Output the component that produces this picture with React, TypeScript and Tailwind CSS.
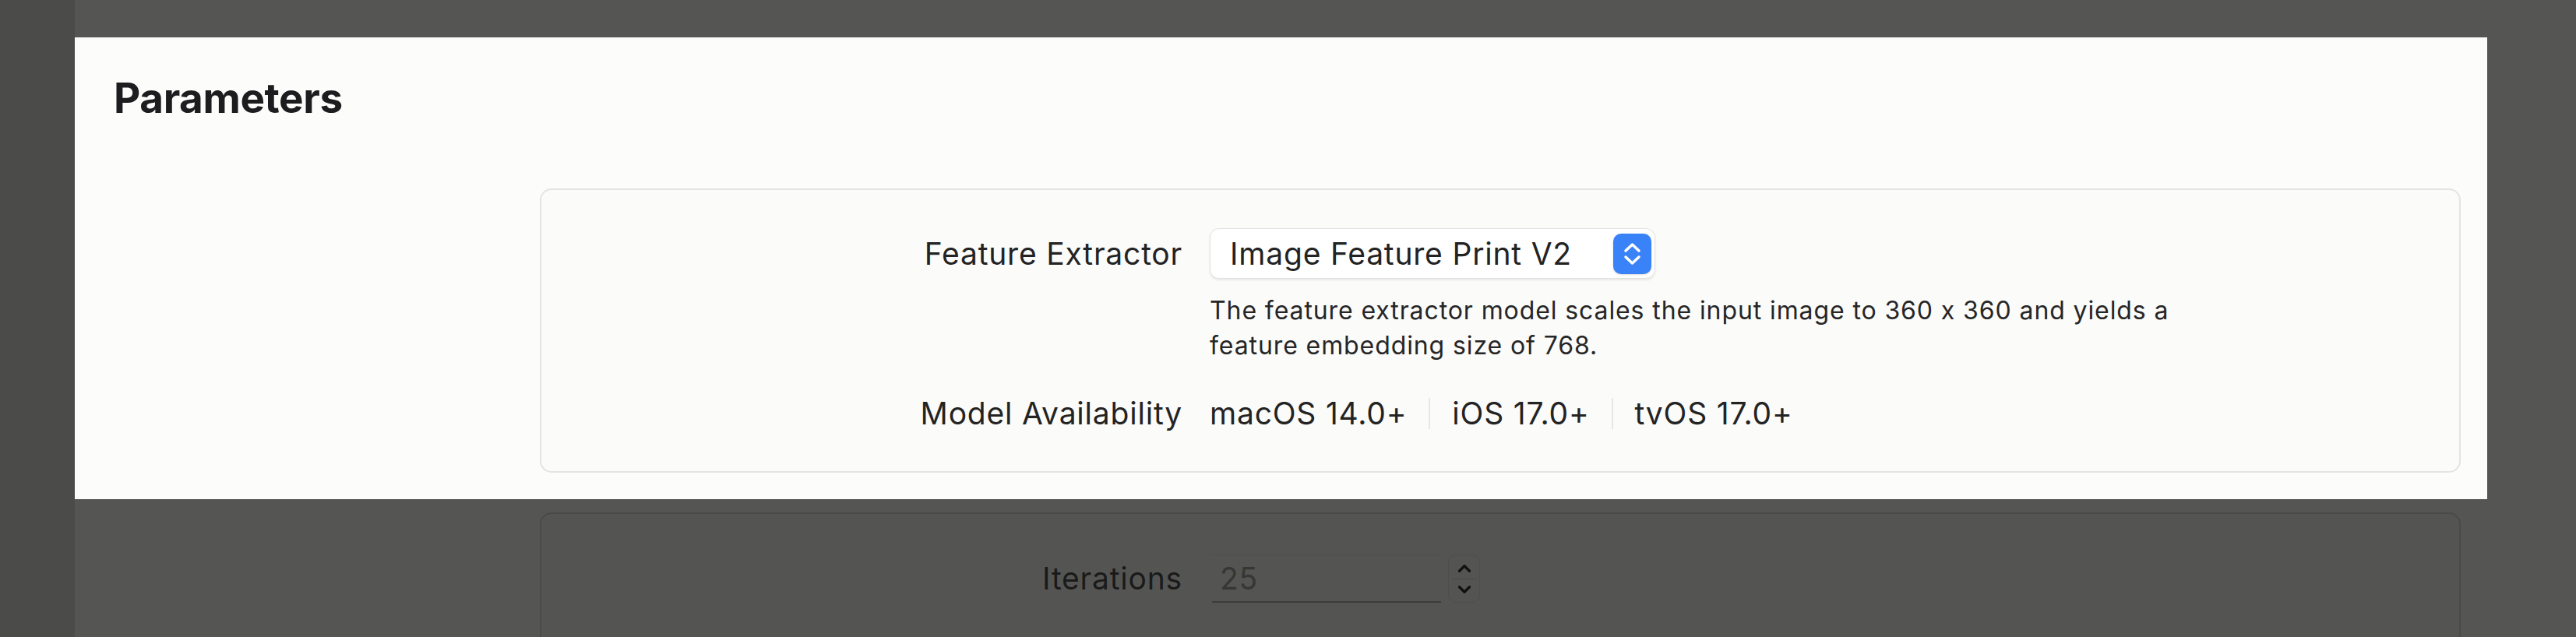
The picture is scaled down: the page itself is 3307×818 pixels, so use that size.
import { ChevronDown, ChevronUp } from "lucide-react";

function PopupStepper() {
  return (
    <div className="flex h-[52px] w-[49px] items-center justify-center rounded-[10px] bg-[#3a82f7] shadow-[0_1px_2px_rgba(0,0,0,0.15)]">
      <svg width="49" height="52" viewBox="0 0 49 52" fill="none">
        <path d="M16 22 L24.5 14 L33 22" stroke="white" strokeWidth="3.5" strokeLinecap="round" strokeLinejoin="round" />
        <path d="M16 30 L24.5 38 L33 30" stroke="white" strokeWidth="3.5" strokeLinecap="round" strokeLinejoin="round" />
      </svg>
    </div>
  );
}

function Divider() {
  return <span className="mx-[28px] h-[40px] w-[2px] bg-[#e6e6e4]" />;
}

export default function App() {
  return (
    <div className="flex h-[818px] w-[3307px] overflow-hidden bg-[#555654] font-['Inter',sans-serif] [font-feature-settings:'calt'_0]">
      {/* sidebar, dimmed */}
      <div className="w-[96px] shrink-0 bg-[#4b4c4a]" />

      <div className="flex flex-1 flex-col pt-[48px]">
        {/* highlighted panel */}
        <section className="flex h-[593px] w-[3097px] shrink-0 flex-col bg-[#fcfcfb]">
          <h2 className="ml-[50px] mt-[52px] text-[53px] font-bold leading-none tracking-[-0.4px] text-[#1d1d1f]">
            Parameters
          </h2>

          <div className="ml-[597px] mr-[34px] mt-[89px] h-[365px] rounded-[15px] border-2 border-[#e4e4e2] bg-[#fbfbfa] pt-[49px]">
            <div className="grid grid-cols-[823px_1fr] gap-x-[35px] text-[39px] leading-[48px] tracking-[0.8px] text-[#232323]">
              <div className="flex h-[65px] items-center justify-end">Feature Extractor</div>
              <div className="flex h-[65px] w-[572px] items-center justify-between rounded-[12px] border border-[#e2e2e0] bg-white pl-[25px] pr-[4px] shadow-[0_2px_3px_rgba(0,0,0,0.08)]">
                <span>Image Feature Print V2</span>
                <PopupStepper />
              </div>

              <div />
              <p className="mt-[18px] w-[1290px] text-[32px] leading-[45px] tracking-[0.9px] text-[#262626]">
                The feature extractor model scales the input image to 360 x 360 and yields a feature embedding size of 768.
              </p>

              <div className="mt-[41px] text-right">Model Availability</div>
              <div className="mt-[41px] flex items-center">
                <span>macOS 14.0+</span>
                <Divider />
                <span>iOS 17.0+</span>
                <Divider />
                <span>tvOS 17.0+</span>
              </div>
            </div>
          </div>
        </section>

        {/* next card, dimmed */}
        <div className="ml-[597px] mr-[148px] mt-[17px] flex-1 rounded-t-[15px] border-2 border-b-0 border-[#4a4b49] bg-[#545553] pt-[52px]">
          <div className="grid grid-cols-[823px_1fr] gap-x-[35px] text-[39px] leading-[48px] tracking-[0.8px]">
            <div className="flex h-[62px] items-center justify-end text-[#1a1a1a]">Iterations</div>
            <div className="flex items-center">
              <div className="ml-[3px] flex h-[62px] w-[294px] items-center border-t border-b-2 border-t-[#4f504e] border-b-[#3c3d3b] pl-[10px] text-[#363735]">
                25
              </div>
              <div className="ml-[9px] flex h-[62px] w-[41px] flex-col items-center justify-center rounded-[10px] border border-[#4e4f4d] text-[#111]">
                <ChevronUp size={26} strokeWidth={3} />
                <span className="h-px w-[30px] bg-[#4a4b49]" />
                <ChevronDown size={26} strokeWidth={3} />
              </div>
            </div>
          </div>
        </div>
      </div>
    </div>
  );
}
